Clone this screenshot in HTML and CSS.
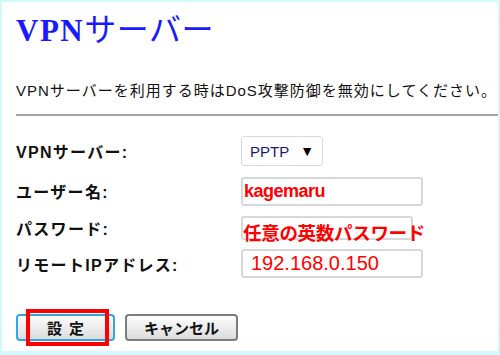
FILE: index.html
```html
<!DOCTYPE html>
<html lang="ja">
<head>
    <meta charset="UTF-8">
    <title>VPNサーバー</title>
    <link rel="stylesheet" href="styles.css">
</head>
<body>
    <div class="page">
        <h1 class="title">VPN<span class="title-jp">サーバー</span></h1>
        <p class="note">VPNサーバーを利用する時はDoS攻撃防御を無効にしてください。</p>
        <div class="rule"></div>
        <div class="form">
            <div class="row row-1">
                <span class="label">VPNサーバー:</span>
                <div class="select">PPTP <span class="arrow">&#9660;</span></div>
            </div>
            <div class="row row-2">
                <span class="label">ユーザー名:</span>
                <div class="field user">kagemaru</div>
            </div>
            <div class="row row-3">
                <span class="label">パスワード:</span>
                <div class="field pass"><span class="pass-text">任意の英数パスワード</span></div>
            </div>
            <div class="row row-4">
                <span class="label">リモートIPアドレス:</span>
                <div class="field ip">192.168.0.150</div>
            </div>
        </div>
        <div class="buttons">
            <div class="btn-wrap">
                <button class="btn btn-ok">設&nbsp;&nbsp;定</button>
                <span class="mark"></span>
            </div>
            <button class="btn">キャンセル</button>
        </div>
    </div>
</body>
</html>
```

FILE: styles.css
```css
body {
    margin: 0;
    background: #fff;
    font-family: "Liberation Sans", "Noto Sans CJK JP", sans-serif;
    color: #111;
}
.page {
    width: 500px;
    height: 355px;
    box-sizing: border-box;
    border: 2px solid #d2fafa;
    border-bottom-width: 4px;
    padding-left: 14px;
}
.title {
    margin: 0;
    padding-top: 10px;
    font-family: "Liberation Serif", "Noto Sans CJK JP", serif;
    font-size: 31px;
    line-height: 36px;
    font-weight: bold;
    color: #1a1aff;
    letter-spacing: 1.5px;
}
.title-jp {
    font-weight: normal;
    font-size: 32px;
    letter-spacing: 0.5px;
}
.note {
    margin: 33px 0 0;
    font-size: 15px;
    line-height: 18px;
    letter-spacing: 1px;
}
.rule {
    margin-top: 14px;
    height: 2px;
    background: #a8a4a4;
}
.form {
    margin-top: 14px;
}
.row {
    display: flex;
    align-items: center;
}
.row-1 { height: 42px; }
.row-2 { height: 38px; }
.row-3 { height: 36px; }
.row-4 { height: 35px; }
.label {
    width: 225px;
    font-size: 16px;
    font-weight: bold;
    letter-spacing: 1.3px;
}
.select {
    box-sizing: border-box;
    width: 82px;
    height: 30px;
    border: 1px solid #d6dbe2;
    border-radius: 3px;
    padding: 0 0 0 8px;
    display: flex;
    align-items: center;
    font-size: 15px;
    color: #1a1a6a;
}
.arrow {
    margin-left: 11px;
    font-size: 14px;
    color: #000;
}
.field {
    box-sizing: border-box;
    width: 182px;
    height: 29px;
    border: 2px solid #d6d8dc;
    border-radius: 3px;
    color: #ff0000;
    white-space: nowrap;
    display: flex;
    align-items: center;
}
.user {
    padding-left: 1px;
    font-size: 18px;
    font-weight: bold;
    letter-spacing: -0.5px;
}
.pass {
    width: 172px;
    height: 24px;
    padding-left: 0;
    align-items: flex-start;
}
.pass-text {
    margin-top: 6px;
    font-size: 18.5px;
    font-weight: bold;
    line-height: 20px;
    letter-spacing: -0.3px;
}
.ip {
    padding-left: 8px;
    font-size: 20px;
}
.buttons {
    display: flex;
    gap: 10px;
    margin-top: 33px;
}
.btn-wrap {
    position: relative;
}
.btn {
    box-sizing: border-box;
    height: 27px;
    width: 113px;
    border: 2px solid #7d7d7d;
    border-radius: 4px;
    background: linear-gradient(#fdfdfd, #dcdcdc);
    font-family: "Noto Sans CJK JP", sans-serif;
    font-size: 15px;
    font-weight: bold;
    color: #111;
    padding: 0;
}
.btn-ok {
    width: 99px;
    border-color: #3aa2dc;
}
.mark {
    position: absolute;
    left: 10px;
    top: -5px;
    width: 83px;
    height: 37px;
    box-sizing: border-box;
    border: 4px solid #ff0000;
}
```
